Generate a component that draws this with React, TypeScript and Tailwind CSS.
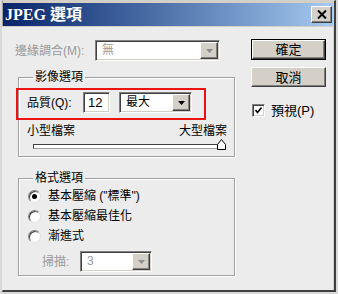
import React from 'react';

// classic Windows bevels
const sunken =
  'border border-t-[#808080] border-l-[#808080] border-r-white border-b-white shadow-[inset_1px_1px_0_#404040,inset_-1px_-1px_0_#d4d0c8]';
const raised =
  'border border-t-white border-l-white border-r-[#404040] border-b-[#404040] shadow-[inset_-1px_-1px_0_#808080]';

const Arrow = ({ disabled }: { disabled?: boolean }) => (
  <svg width="7" height="4" viewBox="0 0 7 4">
    <path d="M0 0h7L3.5 4z" fill={disabled ? '#8c8c8c' : '#000'} />
  </svg>
);

const Combo = ({
  value,
  className,
  disabled,
}: {
  value: string;
  className: string;
  disabled?: boolean;
}) => (
  <div className={`${sunken} ${className} bg-white flex h-[21px] p-[1px]`}>
    <span
      className={`flex-1 pl-[5px] leading-[17px] ${disabled ? 'text-[#9a9a9a]' : 'text-black'}`}
    >
      {value}
    </span>
    <span className={`${raised} w-[18px] bg-[#d4d0c8] flex items-center justify-center`}>
      <Arrow disabled={disabled} />
    </span>
  </div>
);

const Radio = ({ checked, label }: { checked?: boolean; label: string }) => (
  <div className="flex items-center h-[20px] pl-[9px]">
    <span className="w-[13px] h-[13px] rounded-full bg-white border border-t-[#808080] border-l-[#808080] border-r-[#e0e0e0] border-b-[#e0e0e0] shadow-[inset_1px_1px_0_#404040] flex items-center justify-center">
      {checked && <span className="w-[5px] h-[5px] rounded-full bg-black" />}
    </span>
    <span className="ml-[7px]">{label}</span>
  </div>
);

const Group = ({ title, children }: { title: string; children: React.ReactNode }) => (
  <fieldset className="border border-[#a0a0a0] shadow-[1px_1px_0_#fff,inset_1px_1px_0_#fff] w-[217px] ml-[15px]">
    <legend className="ml-[14px] px-[2px] leading-[16px]">{title}</legend>
    {children}
  </fieldset>
);

export default function App() {
  return (
    <div className="w-[338px] h-[294px] bg-[#d9d9d9] overflow-hidden font-['Liberation_Sans','Noto_Sans_CJK_TC',sans-serif] text-[12px] text-black">
      <div className="ml-[2px] w-[334px] h-[292px] flex flex-col border-l border-t border-l-[#a0a0a0] border-t-[#d4d0c8] border-r-2 border-b-2 border-r-[#404040] border-b-[#404040] bg-[#d4d0c8] pt-[2px] pr-[1px]">
        {/* title bar */}
        <div className="h-[23px] flex items-center justify-between pl-[2px] pr-[1px] bg-gradient-to-r from-[#0a246a] to-[#a6caf0]">
          <span className="text-white font-bold text-[16px] font-['Liberation_Serif','Noto_Sans_CJK_TC',serif] leading-none">
            JPEG 選項
          </span>
          <button className={`${raised} w-[21px] h-[17px] bg-[#d4d0c8] flex items-center justify-center`}>
            <svg width="10" height="9" viewBox="0 0 10 9">
              <path d="M1 0.5l8 8M9 0.5l-8 8" stroke="#000" strokeWidth="2" />
            </svg>
          </button>
        </div>

        {/* body */}
        <div className="flex-1 flex bg-[#ececec] border-t border-[#d4d0c8] -ml-[1px]">
          <div className="w-[236px] pl-[1px]">
            <div className="flex items-center mt-[13px] ml-[12px] h-[21px]">
              <span className="w-[80px] text-[#9a9a9a]">邊緣調合(M):</span>
              <Combo value="無" className="w-[125px]" disabled />
            </div>

            <div className="mt-[8px]">
              <Group title="影像選項">
                <div className="relative flex items-center mt-[7px] pl-[8px] h-[21px]">
                  <span className="w-[56px]">品質(Q):</span>
                  <div className={`${sunken} w-[27px] h-[21px] bg-white pl-[4px] leading-[19px] text-[13px]`}>12</div>
                  <Combo value="最大" className="w-[73px] ml-[9px]" />
                  <div className="absolute -left-[3px] -top-[4px] w-[190px] h-[32px] border-2 border-[#ee1111]" />
                </div>
                <div className="flex justify-between mt-[10px] pl-[8px] pr-[7px] leading-[16px]">
                  <span>小型檔案</span>
                  <span>大型檔案</span>
                </div>
                <div className="relative mt-[5px] ml-[14px] mr-[9px] h-[5px] bg-white border border-t-[#404040] border-l-[#404040] border-r-[#a0a0a0] border-b-[#a0a0a0] mb-[7px]">
                  <svg
                    className="absolute -right-[2px] -top-[6px]"
                    width="9"
                    height="11"
                    viewBox="0 0 9 11"
                  >
                    <path d="M0.5 10.5V5.5L4.5 0.5L8.5 5.5V10.5Z" fill="#fff" stroke="#000" />
                  </svg>
                </div>
              </Group>
            </div>

            <div className="mt-[13px]">
              <Group title="格式選項">
                <Radio checked label='基本壓縮 ("標準")' />
                <Radio label="基本壓縮最佳化" />
                <Radio label="漸進式" />
                <div className="flex items-center mt-[5px] mb-[3px] pl-[23px] h-[21px]">
                  <span className="w-[38px] text-[#9a9a9a]">掃描:</span>
                  <Combo value="3" className="w-[72px]" disabled />
                </div>
              </Group>
            </div>
          </div>

          <div className="pt-[12px] pl-[13px] flex flex-col">
            <div className="border border-black w-[75px] h-[21px]">
              <button className={`${raised} w-full h-full bg-[#d4d0c8] text-[13px] leading-none`}>確定</button>
            </div>
            <button className={`${raised} mt-[7px] w-[75px] h-[20px] bg-[#d4d0c8] text-[13px] leading-none`}>取消</button>
            <div className="flex items-center mt-[14px] ml-[1px]">
              <span className={`${sunken} w-[13px] h-[13px] bg-white flex items-center justify-center`}>
                <svg width="7" height="7" viewBox="0 0 7 7">
                  <path d="M0.5 3l2 2.5L6.5 0.5" fill="none" stroke="#000" strokeWidth="1.6" />
                </svg>
              </span>
              <span className="ml-[6px] text-[13px]">預視(P)</span>
            </div>
          </div>
        </div>
      </div>
    </div>
  );
}
